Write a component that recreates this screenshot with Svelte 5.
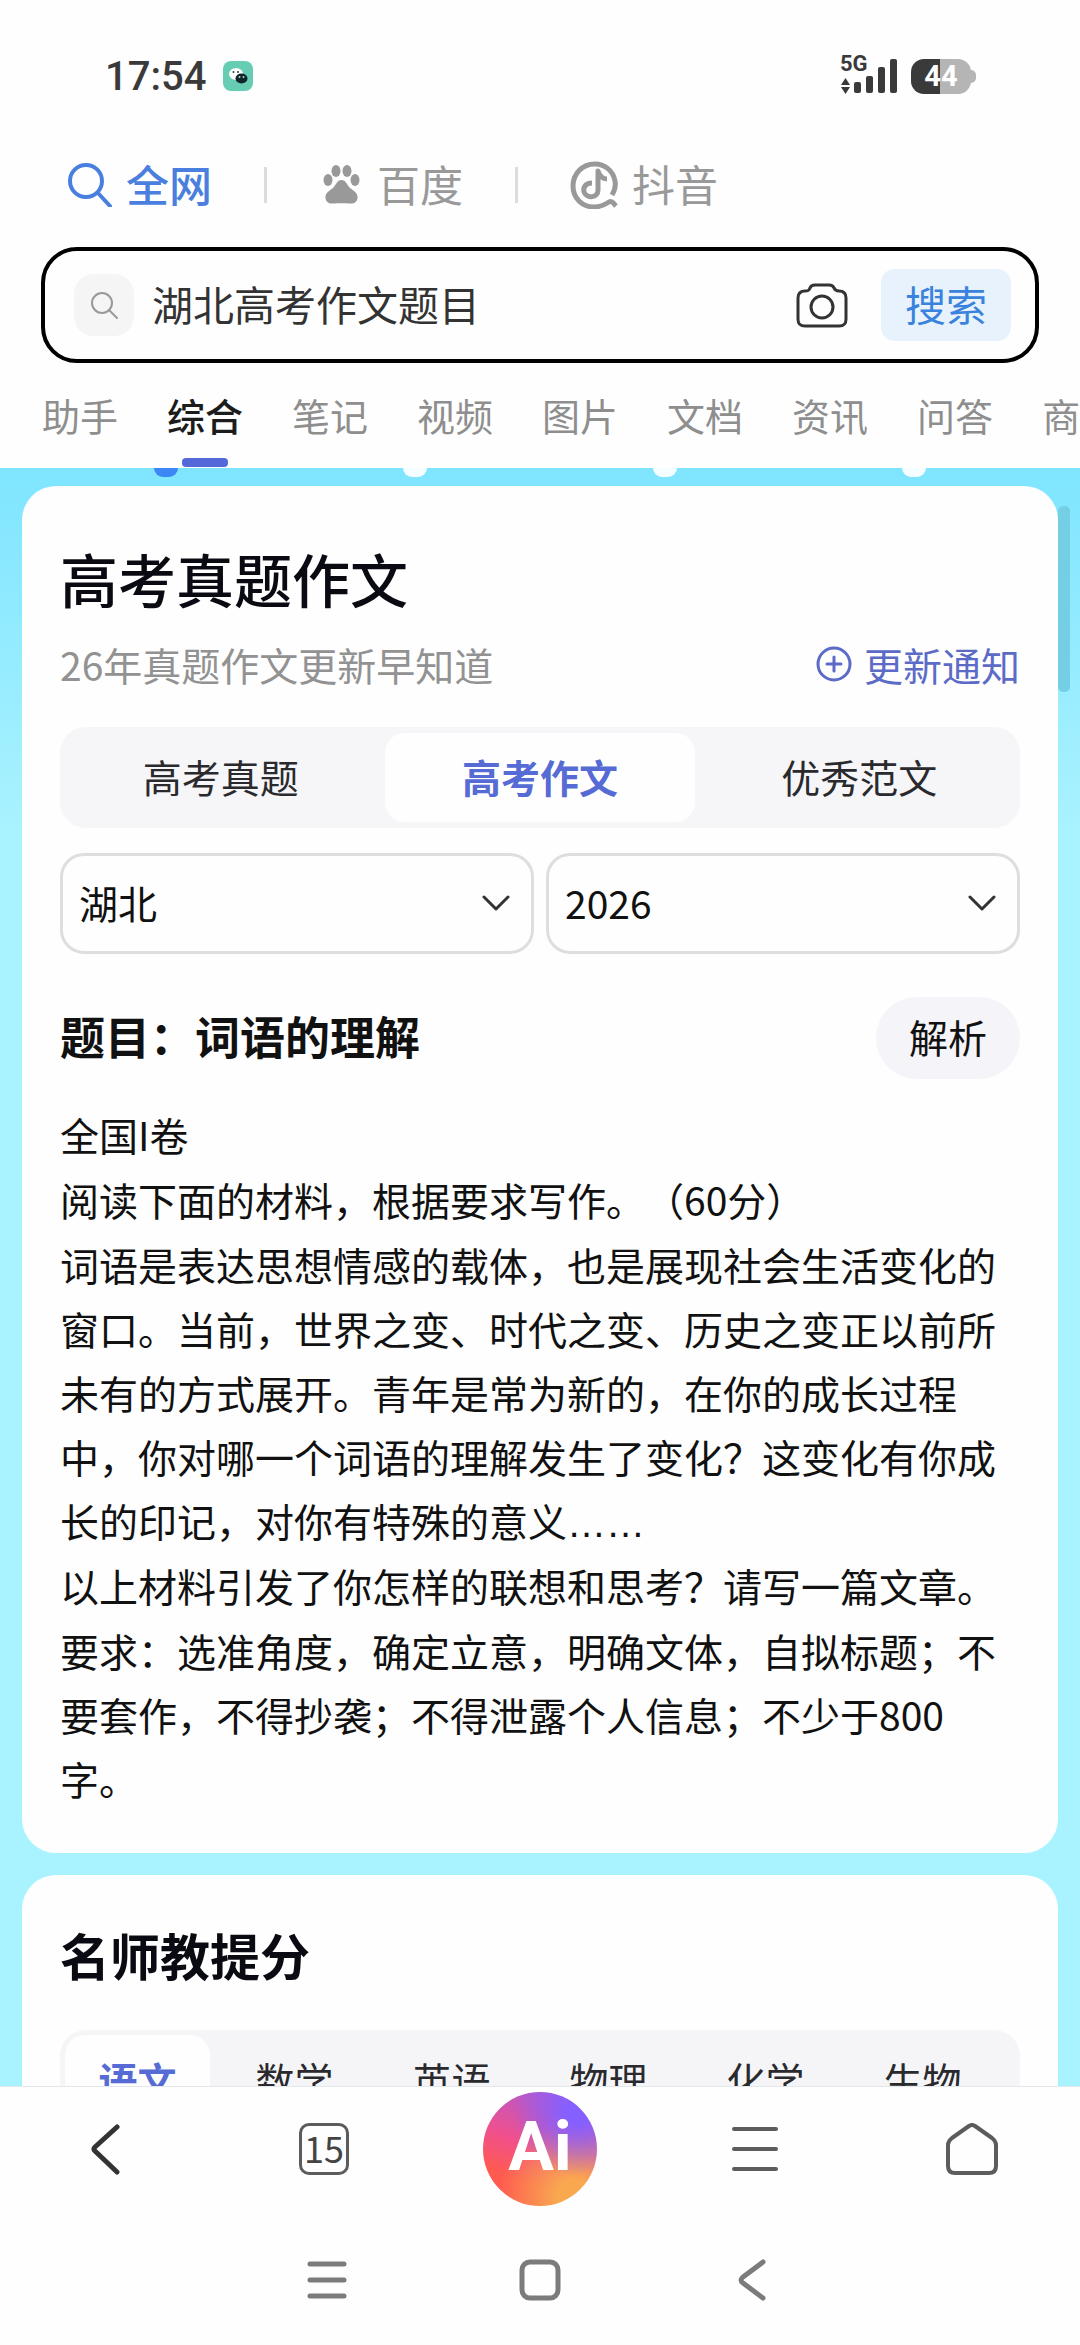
<script lang="ts">
let keyword = $state('湖北高考作文题目');
let province = $state('湖北');
let year = $state('2026');
let activeTab = $state('综合');
let activeSection = $state('高考作文');
let activeSubject = $state('语文');

const tabs = ['助手', '综合', '笔记', '视频', '图片', '文档', '资讯', '问答', '商品'];
const sections = ['高考真题', '高考作文', '优秀范文'];
const subjects = ['语文', '数学', '英语', '物理', '化学', '生物'];
const provinces = ['湖北', '湖南', '河南'];
const years = ['2026', '2025', '2024'];
</script>

{#snippet chevron()}
    <svg class="chevron" viewBox="0 0 28 18" aria-hidden="true">
        <path d="M2 3 L14 15 L26 3" />
    </svg>
{/snippet}

<div class="screen">
    <header>
        <div class="status">
            <span class="time">17:54</span>
            <svg class="wechat" viewBox="0 0 30 30" aria-hidden="true">
                <rect width="30" height="30" rx="8" fill="#66cdb3" />
                <ellipse cx="13" cy="13" rx="7" ry="6" fill="#fff" />
                <circle cx="10.500" cy="11" r="1" fill="#26443d" />
                <circle cx="15" cy="11" r="1" fill="#26443d" />
                <ellipse cx="18.500" cy="17.500" rx="6" ry="5" fill="#10242b" />
                <circle cx="16.500" cy="16" r="1" fill="#b9d8d0" />
                <circle cx="20.500" cy="16" r="1" fill="#b9d8d0" />
            </svg>
            <div class="signal">
                <span class="network">5G</span>
                <svg viewBox="0 0 58 36" aria-hidden="true">
                    <path d="M1 27 L5.500 20 L10 27 Z M1 29 L5.500 36 L10 29 Z" />
                    <rect x="14" y="24" width="7" height="11" rx="2" />
                    <rect x="26" y="18" width="7" height="17" rx="2" />
                    <rect x="38" y="9" width="7" height="26" rx="2" />
                    <rect x="50" y="1" width="7" height="34" rx="2" />
                </svg>
            </div>
            <div class="battery"><span>44</span></div>
        </div>

        <nav class="engines">
            <a class="engine current" href="#all">
                <svg class="magnifier" viewBox="0 0 44 44" aria-hidden="true">
                    <circle cx="18" cy="18" r="16" />
                    <path d="M30 30 L42 43" />
                </svg>
                <span>全网</span>
            </a>
            <i class="divider"></i>
            <a class="engine" href="#baidu">
                <svg class="paw" viewBox="0 0 44 44" aria-hidden="true">
                    <ellipse cx="9" cy="17" rx="4.500" ry="6" />
                    <ellipse cx="17" cy="8" rx="4.500" ry="6" />
                    <ellipse cx="28" cy="8" rx="4.500" ry="6" />
                    <ellipse cx="36" cy="17" rx="4.500" ry="6" />
                    <path d="M22.500 17 C27 17 28 22 31 25 C35 28 39 30 38.500 35 C38 39 35 41 31 40.500 C27 40 18 40 14 40.500 C10 41 7 39 6.500 35 C6 30 10 28 14 25 C17 22 18 17 22.500 17 Z" />
                </svg>
                <span>百度</span>
            </a>
            <i class="divider"></i>
            <a class="engine" href="#douyin">
                <svg class="douyin" viewBox="0 0 48 48" aria-hidden="true">
                    <path d="M42 34 C45 29 46 25 45 20 C43 9 34 3 25 3 C12 3 3 13 3 25 C3 37 12 46 24 46 C31 46 36 43 39 41 C42 39 43 42 46 45" />
                    <path d="M22 22 C15 22 13 27 14 31 C17 38 28 37 28 29 L28 10 C30 16 33 18 37 18" />
                </svg>
                <span>抖音</span>
            </a>
        </nav>

        <form class="search" onsubmit={(e) => e.preventDefault()}>
            <span class="badge">
                <svg viewBox="0 0 28 28" aria-hidden="true">
                    <circle cx="12" cy="12" r="10" />
                    <path d="M19 19 L27 27" />
                </svg>
            </span>
            <input type="text" aria-label="搜索内容" bind:value={keyword} />
            <button class="camera" type="button" aria-label="拍照搜索">
                <svg viewBox="0 0 52 46" aria-hidden="true">
                    <path d="M9 9 C13 9 13 8 14 6 C15 3 17 3 19 3 H33 C35 3 37 3 38 6 C39 8 40 9 43 9 C48 9 50 12 50 16 V37 C50 42 48 44 43 44 H9 C4 44 2 42 2 37 V16 C2 12 4 9 9 9 Z" />
                    <circle cx="26" cy="25" r="11" />
                </svg>
            </button>
            <button class="submit" type="submit">搜索</button>
        </form>

        <nav class="tabs">
            {#each tabs as tab}
                <button class:active={activeTab === tab} onclick={() => (activeTab = tab)}>{tab}</button>
            {/each}
        </nav>
    </header>

    <main>
        <div class="dots">
            <i class="on"></i>
            <i></i>
            <i></i>
            <i></i>
        </div>
        <div class="scrollbar"></div>

        <section class="card">
            <h1>高考真题作文</h1>
            <div class="subtitle">
                <span>26年真题作文更新早知道</span>
                <button class="notify">
                    <svg viewBox="0 0 36 36" aria-hidden="true">
                        <circle cx="18" cy="18" r="16" />
                        <path d="M18 11 V25 M11 18 H25" />
                    </svg>
                    更新通知
                </button>
            </div>

            <div class="segmented">
                {#each sections as section}
                    <button class:active={activeSection === section} onclick={() => (activeSection = section)}>{section}</button>
                {/each}
            </div>

            <div class="filters">
                <label class="filter">
                    <select aria-label="省份" bind:value={province}>
                        {#each provinces as p}
                            <option>{p}</option>
                        {/each}
                    </select>
                    {@render chevron()}
                </label>
                <label class="filter">
                    <select aria-label="年份" bind:value={year}>
                        {#each years as y}
                            <option>{y}</option>
                        {/each}
                    </select>
                    {@render chevron()}
                </label>
            </div>

            <div class="question">
                <h2>题目：词语的理解</h2>
                <button class="analysis">解析</button>
            </div>

            <div class="body">
                <p>全国I卷</p>
                <p>阅读下面的材料，根据要求写作。（60分）</p>
                <p>词语是表达思想情感的载体，也是展现社会生活变化的窗口。当前，世界之变、时代之变、历史之变正以前所未有的方式展开。青年是常为新的，在你的成长过程中，你对哪一个词语的理解发生了变化？这变化有你成长的印记，对你有特殊的意义<span class="ellipsis">……</span></p>
                <p>以上材料引发了你怎样的联想和思考？请写一篇文章。</p>
                <p>要求：选准角度，确定立意，明确文体，自拟标题；不要套作，不得抄袭；不得泄露个人信息；不少于800字。</p>
            </div>
        </section>

        <section class="card">
            <h2 class="teachers">名师教提分</h2>
            <div class="subjects">
                {#each subjects as subject}
                    <button class:active={activeSubject === subject} onclick={() => (activeSubject = subject)}>{subject}</button>
                {/each}
            </div>
        </section>
    </main>

    <footer>
        <nav class="toolbar">
            <button aria-label="后退">
                <svg class="back" viewBox="0 0 52 52" aria-hidden="true">
                    <path d="M35 4 L13 24 Q11 26 13 28 L35 49" />
                </svg>
            </button>
            <button aria-label="15 个窗口"><span class="windows">15</span></button>
            <button><span class="ai">Ai</span></button>
            <button aria-label="菜单">
                <svg viewBox="0 0 52 52" aria-hidden="true">
                    <path d="M4 6 H46 M4 26 H46 M4 46 H46" />
                </svg>
            </button>
            <button aria-label="主页">
                <svg viewBox="0 0 52 52" aria-hidden="true">
                    <path d="M23 3 Q26 1 29 3 L46 15 Q50 18 50 22 V43 Q50 50 43 50 H9 Q2 50 2 43 V22 Q2 18 6 15 Z" />
                </svg>
            </button>
        </nav>
        <nav class="system">
            <button aria-label="最近任务">
                <svg viewBox="0 0 44 44" aria-hidden="true">
                    <path d="M5 6 H39 M5 22 H39 M5 38 H39" />
                </svg>
            </button>
            <button aria-label="桌面">
                <svg viewBox="0 0 44 44" aria-hidden="true">
                    <rect x="4" y="4" width="36" height="36" rx="8" />
                </svg>
            </button>
            <button aria-label="返回">
                <svg viewBox="0 0 44 44" aria-hidden="true">
                    <path d="M32 4 L12 19 Q8 22 12 25 L32 40" />
                </svg>
            </button>
        </nav>
    </footer>
</div>

<style>
    :global(body) {
        background: #fefefe;
    }

    .screen {
        display: flex;
        flex-direction: column;
        height: 100vh;
        overflow: hidden;
        font-family: "Noto Sans CJK SC", sans-serif;
        font-size: 39px;
        color: #111;
        background: #fefefe;
        text-spacing-trim: space-all;
    }

    h1, h2, p {
        margin: 0;
    }

    button {
        padding: 0;
        border: 0;
        background: none;
        font: inherit;
        color: inherit;
        white-space: nowrap;
    }

    svg {
        display: block;
        flex: none;
        fill: none;
        stroke: currentColor;
        stroke-linecap: round;
        stroke-linejoin: round;
    }

    /* status bar */
    .status {
        display: flex;
        align-items: center;
        height: 152px;
        padding: 0 109px 0 105px;
        font-family: Roboto, sans-serif;
        color: #3a3a3a;
    }

    .time {
        font-size: 40px;
        font-weight: 500;
    }

    .wechat {
        width: 30px;
        height: 30px;
        margin-left: 17px;
        stroke: none;
    }

    .signal {
        position: relative;
        margin-left: auto;
    }

    .signal svg {
        width: 58px;
        height: 36px;
        fill: #3a3a3a;
        stroke: none;
    }

    .network {
        position: absolute;
        top: -6px;
        left: 0;
        font-size: 22px;
        line-height: 24px;
        font-weight: 700;
    }

    .battery {
        position: relative;
        width: 60px;
        height: 35px;
        margin-left: 13px;
        border-radius: 13px;
        background: linear-gradient(to right, #3a3a3a 48%, #b5b5b5 48%);
        color: #fff;
        font-size: 29px;
        line-height: 35px;
        font-weight: 700;
        text-align: center;
    }

    .battery::after {
        content: "";
        position: absolute;
        top: 11px;
        right: -5px;
        width: 6px;
        height: 13px;
        border-radius: 0 5px 5px 0;
        background: #b5b5b5;
    }

    /* search engines */
    .engines {
        display: flex;
        align-items: center;
        gap: 52px;
        height: 66px;
        padding: 0 68px;
    }

    .engine {
        display: flex;
        align-items: center;
        gap: 14px;
        font-size: 43px;
        line-height: 60px;
        color: #999;
        text-decoration: none;
    }

    .engine span {
        padding-bottom: 4px;
    }

    .engine.current {
        color: #4a7fe0;
        font-weight: 500;
    }

    .divider {
        width: 3px;
        height: 36px;
        background: #dcdcdc;
    }

    .magnifier,
    .paw {
        width: 44px;
        height: 44px;
        stroke-width: 4;
    }

    .paw {
        fill: currentColor;
        stroke: none;
    }

    .douyin {
        width: 48px;
        height: 48px;
        stroke-width: 5;
        stroke-linecap: butt;
    }

    /* search box */
    .search {
        display: flex;
        align-items: center;
        box-sizing: border-box;
        height: 116px;
        margin: 29px 41px 0;
        padding: 0 24px 0 29px;
        border: 4px solid #000;
        border-radius: 36px;
    }

    .badge {
        display: flex;
        align-items: center;
        justify-content: center;
        width: 60px;
        height: 62px;
        border-radius: 20px;
        background: #f5f5f6;
        color: #999;
    }

    .badge svg {
        width: 28px;
        height: 28px;
        stroke-width: 2;
    }

    .search input {
        flex: 1;
        min-width: 0;
        padding: 0 0 4px 18px;
        border: 0;
        outline: 0;
        background: none;
        font: inherit;
        font-size: 41px;
        color: #333;
    }

    .camera svg {
        width: 52px;
        height: 46px;
        stroke: #333;
        stroke-width: 3;
    }

    .submit {
        width: 130px;
        height: 72px;
        margin-left: 33px;
        padding-bottom: 4px;
        border-radius: 14px;
        background: #e7f2fd;
        color: #3a83dc;
        font-size: 41px;
        line-height: 68px;
    }

    /* result tabs */
    .tabs {
        display: flex;
        gap: 49px;
        height: 105px;
        padding: 0 42px;
        overflow: hidden;
        font-size: 38px;
        color: #8e8e8e;
    }

    .tabs button {
        position: relative;
        flex: none;
        padding-bottom: 2px;
    }

    .tabs .active {
        color: #1c1c1c;
        font-weight: 500;
    }

    .tabs .active::after {
        content: "";
        position: absolute;
        bottom: 1px;
        left: 50%;
        width: 46px;
        height: 9px;
        margin-left: -23px;
        border-radius: 4px;
        background: #5468d9;
    }

    /* feed */
    main {
        position: relative;
        flex: 1;
        min-height: 0;
        padding: 0 22px;
        overflow: hidden;
        background: linear-gradient(#7fe5ff, #a9f2ff 360px);
    }

    .dots {
        display: grid;
        grid-template-columns: repeat(4, 1fr);
        justify-items: center;
        height: 18px;
        padding: 0 19px;
    }

    .dots i {
        width: 24px;
        height: 9px;
        border-radius: 0 0 12px 12px;
        background: #f4fdff;
    }

    .dots .on {
        background: #3d86f5;
    }

    .scrollbar {
        position: absolute;
        top: 38px;
        right: 10px;
        width: 12px;
        height: 186px;
        border-radius: 5px;
        background: #74cfe4;
    }

    .card {
        position: relative;
        margin-bottom: 22px;
        padding: 52px 38px 43px;
        border-radius: 34px;
        background: #fefefe;
    }

    h1 {
        font-size: 58px;
        line-height: 80px;
        font-weight: 500;
        color: #0a0a12;
    }

    .subtitle {
        display: flex;
        align-items: center;
        justify-content: space-between;
        height: 60px;
        margin-top: 16px;
        color: #929292;
    }

    .notify {
        display: flex;
        align-items: center;
        gap: 12px;
        color: #5b6bc6;
    }

    .notify svg {
        width: 36px;
        height: 36px;
        stroke-width: 3;
    }

    .segmented {
        display: grid;
        grid-template-columns: repeat(3, 1fr);
        gap: 10px;
        height: 89px;
        margin-top: 33px;
        padding: 6px;
        border-radius: 26px;
        background: #f6f6f9;
        color: #2a2a2e;
    }

    .segmented button,
    .subjects button {
        padding-bottom: 4px;
        border-radius: 20px;
    }

    .segmented .active,
    .subjects .active {
        background: #fefefe;
        color: #566bd4;
        font-weight: 700;
    }

    .filters {
        display: grid;
        grid-template-columns: 1fr 1fr;
        gap: 12px;
        margin-top: 25px;
    }

    .filter {
        position: relative;
    }

    select {
        appearance: none;
        display: block;
        box-sizing: border-box;
        width: 100%;
        height: 101px;
        padding: 0 16px 4px;
        border: 3px solid #dedede;
        border-radius: 24px;
        background: #fefefe;
        font: inherit;
        color: #111;
    }

    .chevron {
        position: absolute;
        top: 41px;
        right: 24px;
        width: 28px;
        height: 18px;
        stroke: #333;
        stroke-width: 3;
        pointer-events: none;
    }

    .question {
        display: flex;
        align-items: center;
        justify-content: space-between;
        margin-top: 43px;
    }

    .question h2 {
        padding-bottom: 4px;
        font-size: 45px;
        line-height: 60px;
        font-weight: 700;
    }

    .analysis {
        width: 144px;
        height: 82px;
        padding-bottom: 4px;
        border-radius: 41px;
        background: #f5f4f9;
    }

    .body {
        display: flex;
        flex-direction: column;
        gap: 1px;
        margin-top: 23px;
        line-height: 64px;
    }

    .ellipsis {
        font-family: "Liberation Sans", sans-serif;
        line-height: 1;
    }

    .teachers {
        font-size: 50px;
        line-height: 70px;
        font-weight: 700;
        color: #0a0a12;
    }

    .card .teachers {
        margin-top: -8px;
    }

    .subjects {
        display: flex;
        gap: 12px;
        height: 91px;
        margin-top: 41px;
        padding: 5px;
        overflow: hidden;
        border-radius: 26px;
        background: #f5f5f8;
        color: #2a2a2e;
    }

    .subjects button {
        flex: none;
        width: 145px;
    }

    /* bottom bars */
    footer {
        border-top: 1px solid #e3e8ea;
        padding-bottom: 17px;
    }

    .toolbar,
    .system {
        display: flex;
        color: #5c5c5c;
    }

    .toolbar button {
        display: flex;
        flex: 1;
        align-items: center;
        justify-content: center;
        height: 124px;
    }

    .toolbar svg {
        width: 52px;
        height: 52px;
        stroke-width: 4;
    }

    .toolbar .back {
        color: #333;
        stroke-width: 5;
    }

    .windows {
        box-sizing: border-box;
        width: 50px;
        height: 52px;
        border: 3px solid #5c5c5c;
        border-radius: 10px;
        font-size: 36px;
        line-height: 42px;
        text-align: center;
        color: #444;
    }

    .ai {
        width: 114px;
        height: 114px;
        border-radius: 50%;
        background:
            radial-gradient(circle at 82% 18%, #8560ff 8%, transparent 48%),
            radial-gradient(circle at 80% 92%, #f9a850 12%, transparent 55%),
            linear-gradient(200deg, #a35be0, #f0508c 50%, #ff5a50 75%);
        color: #fff;
        font-family: Roboto, sans-serif;
        font-size: 68px;
        line-height: 110px;
        font-weight: 700;
        text-align: center;
    }

    .system {
        padding: 0 220px;
        color: #7b7b7b;
    }

    .system button {
        display: flex;
        flex: 1;
        align-items: center;
        justify-content: center;
        height: 97px;
        margin-top: 20px;
    }

    .system svg {
        width: 44px;
        height: 44px;
        stroke-width: 5;
    }
</style>
